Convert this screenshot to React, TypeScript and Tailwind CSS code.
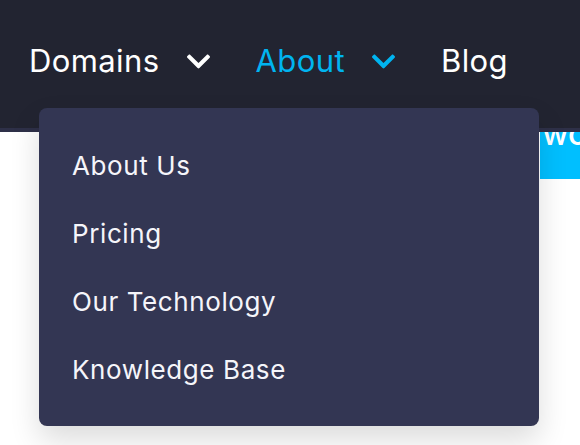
import { FaChevronDown } from "react-icons/fa";

const aboutLinks = ["About Us", "Pricing", "Our Technology", "Knowledge Base"];

function NavItem({ label, active, dropdown }: { label: string; active?: boolean; dropdown?: boolean }) {
  return (
    <div className={`flex items-center gap-[25px] ${active ? "text-[#00b4f0]" : "text-white"}`}>
      <span className="text-[31px] leading-none tracking-[0.4px]">{label}</span>
      {dropdown && <FaChevronDown className="mt-[2px] h-[27px] w-[27px]" />}
    </div>
  );
}

export default function App() {
  return (
    <div
      className="relative h-[445px] w-[580px] overflow-hidden bg-white"
      style={{ fontFamily: "Inter, 'Noto Sans', sans-serif" }}
    >
      <header className="relative z-10 flex h-[132px] items-center gap-[44px] border-b-4 border-[#2e3048] bg-[#222431] pb-[8px] pl-[29px]">
        <NavItem label="Domains" dropdown />
        <NavItem label="About" active dropdown />
        <NavItem label="Blog" />
      </header>

      <div className="flex justify-end">
        <div className="h-[47px] w-[40px] overflow-hidden bg-[#00bfff] pl-[2px]">
          <div className="-mt-[18px] text-[32px] font-medium leading-[40px] text-white">wo</div>
        </div>
      </div>

      <div className="absolute left-[39px] top-[108px] z-20 w-[500px] rounded-lg bg-[#333653] px-[33px] py-[23px] shadow-[0_14px_30px_rgba(0,0,0,0.14)]">
        {aboutLinks.map((link) => (
          <div key={link} className="flex h-[68px] items-center text-[26px] tracking-[0.6px] text-[#f5f5fa]">
            {link}
          </div>
        ))}
      </div>
    </div>
  );
}
